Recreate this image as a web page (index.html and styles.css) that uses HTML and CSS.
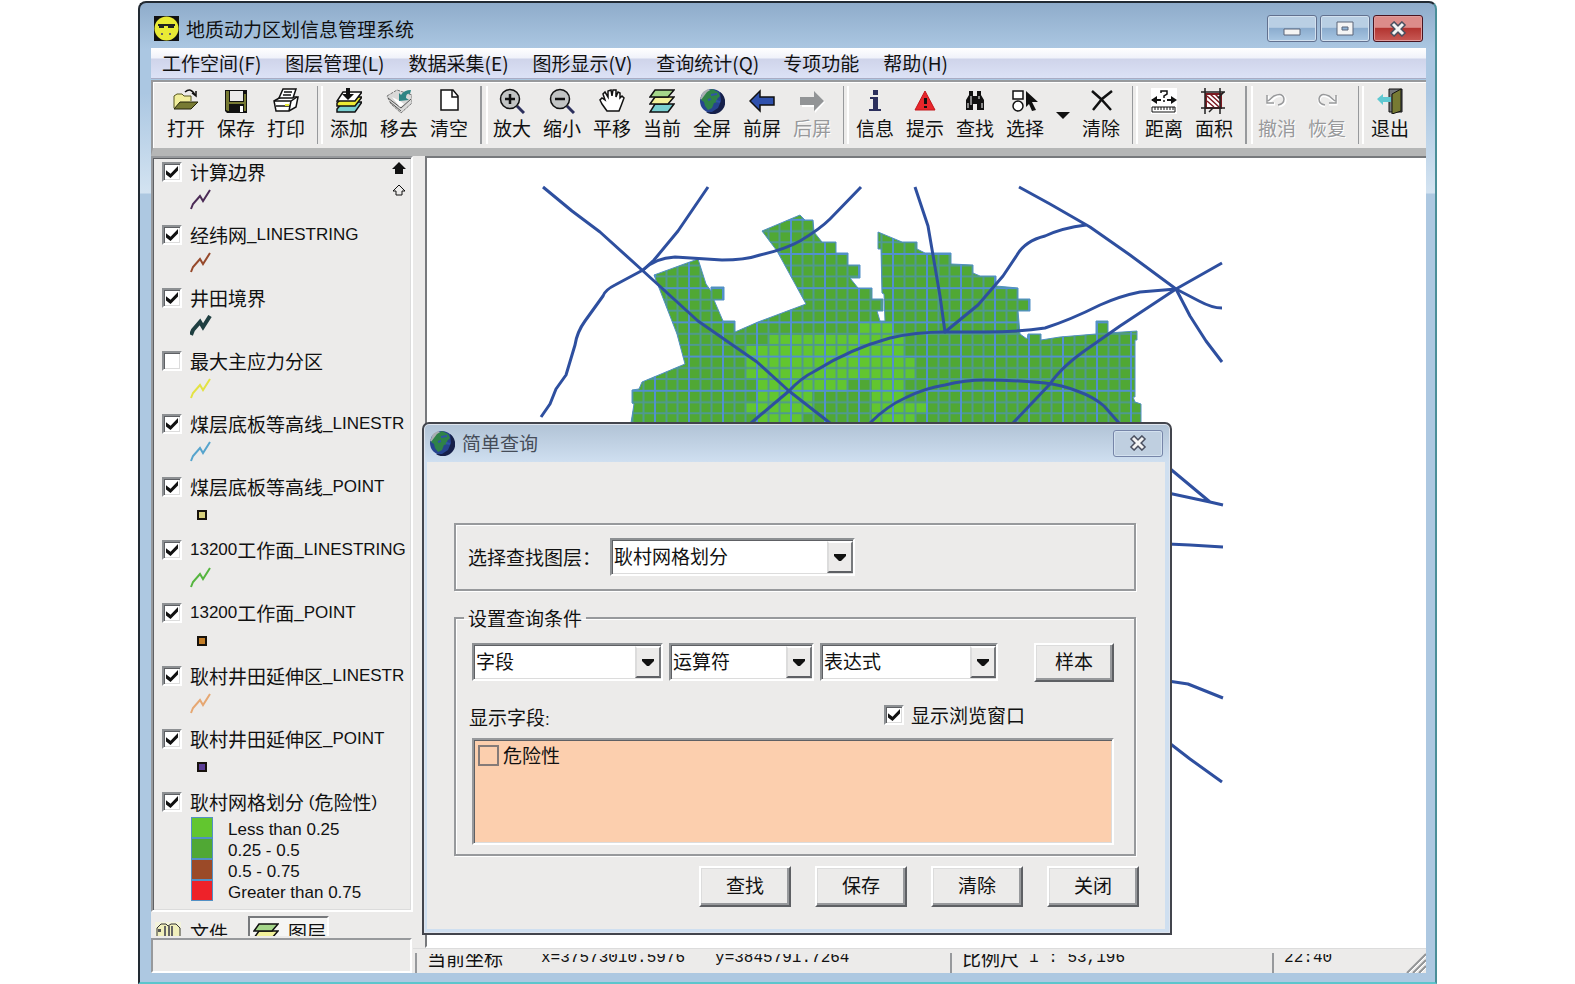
FILE: index.html
```html
<!DOCTYPE html>
<html lang="zh-CN">
<head>
<meta charset="utf-8">
<title>地质动力区划信息管理系统</title>
<link rel="stylesheet" href="styles.css">
</head>
<body>
<svg class="defs" aria-hidden="true">
  <defs>
    <symbol id="zig" viewBox="0 0 22 22"><path d="M1 20 3 15 10 7 13 12 20 1" fill="none" stroke="currentColor"/></symbol>
    <symbol id="globe" viewBox="0 0 26 26">
      <circle cx="13" cy="13" r="12" fill="#27448f"/>
      <path d="M21 4a12 12 0 0 1-14 20l6 0 6-4 3-7z" fill="#16204a"/>
      <path d="M1 11 4 4l5-3 3 2-4 6-4 3z" fill="#a9aeb2"/>
      <path d="M8 4l5-3 6 3 2 4-3 3 1 3-4 1-2 5-4 2-3-4-1-4-3-2 3-4z" fill="#2f8248"/>
      <path d="M12 7l6-1M9 12l3-1M17 13l4 1" stroke="#2f55a6" stroke-width="2"/>
    </symbol>
    <symbol id="layers" viewBox="0 0 26 26">
      <path d="M6 16h19l-6 8H1z" fill="#79cfd0" stroke="#111" stroke-width="1.5"/>
      <path d="M6 9h19l-6 7H1z" fill="#f2f19a" stroke="#111" stroke-width="1.5"/>
      <path d="M6 2h19l-6 7H1z" fill="#a5d68a" stroke="#111" stroke-width="1.5"/>
    </symbol>
    <symbol id="cross" viewBox="0 0 18 16"><path d="M3 2 15 14M15 2 3 14" stroke="#4b5060" stroke-width="6"/><path d="M4 3 14 13M14 3 4 13" stroke="#f4f4f4" stroke-width="3"/></symbol>
    <symbol id="drop" viewBox="0 0 12 7"><path d="M0 0h12v2L7 7H5L0 2z" fill="#111"/></symbol>
    <pattern id="grid" x="654" y="252" width="34" height="34.2" patternUnits="userSpaceOnUse">
      <path d="M12.5 0V34.2M23.5 0V34.2M0 12.5H34M0 23.5H34" stroke="#4f9990" stroke-width="2"/>
      <path d="M1 0V34.2M0 1H34" stroke="#5290cf" stroke-width="2"/>
    </pattern>
  </defs>
</svg>

<div class="window">
  <header class="titlebar">
    <svg class="app-icon" viewBox="0 0 25 25"><path d="M0 0h25v25H0z" fill="#111"/><circle cx="12.500" cy="12.500" r="12" fill="#e9ea35"/><path d="M4 8h17v2H4zM5 10h5v2H5zM14 10h6v2h-6z" fill="#222"/><path d="M7 17h2v2H7zM15 17h2v2h-2z" fill="#666"/></svg>
    <h1>地质动力区划信息管理系统</h1>
    <div class="win-buttons">
      <button class="win-btn" aria-label="最小化"><svg width="18" height="16" viewBox="0 0 18 16"><path d="M1 8h16v6H1z" fill="#f4f4f4" stroke="#5b6578"/></svg></button>
      <button class="win-btn" aria-label="最大化"><svg width="18" height="16" viewBox="0 0 18 16"><path d="M1 1h16v13H1z" fill="#f4f4f4" stroke="#5b6578"/><path d="M6 6h6v3H6z" fill="#8fb3d6" stroke="#5b6578"/></svg></button>
      <button class="win-btn close" aria-label="关闭窗口"><svg width="18" height="16"><use href="#cross"/></svg></button>
    </div>
  </header>

  <nav class="menubar">
    <a href="#">工作空间(F)</a><a href="#">图层管理(L)</a><a href="#">数据采集(E)</a><a href="#">图形显示(V)</a><a href="#">查询统计(Q)</a><a href="#">专项功能</a><a href="#">帮助(H)</a>
  </nav>

  <div class="toolbar">
    <button class="tool"><svg viewBox="0 0 26 26"><path d="M1 20V8l3-2h5l2 2h7v5" fill="#f1ee9c" stroke="#55551c"/><path d="M1 21 7 14H25L18 21z" fill="#777a33" stroke="#22220a"/><path d="M12 4q6-5 10 3M19 5l4 3V3" fill="none" stroke="#111" stroke-width="1.500"/></svg>打开</button>
    <button class="tool"><svg viewBox="0 0 26 26"><path d="M2 2h22v23H4l-2-2z" fill="#111"/><path d="M3 3h3v20H5l-2-1zM21 6h2v17h-2zM6 14h15v2H6z" fill="#777a33"/><path d="M7 3h13v10H7z" fill="#ecebea"/><path d="M17 18h3v6h-3z" fill="#fff"/></svg>保存</button>
    <button class="tool"><svg viewBox="0 0 26 26"><path d="M1 13l7-4h17l-2 10-7 4H3z" fill="#fff" stroke="#111" stroke-width="1.500"/><path d="M10 1h13l-3 9H6z" fill="#fff" stroke="#111" stroke-width="1.500"/><path d="M11 4h8M10 7h8M1 13h17l6-4M18 13l-2 10M3 18h14" fill="none" stroke="#111" stroke-width="1.500"/><path d="M12 16h4v2h-4z" fill="#e9ea35"/></svg>打印</button>
    <span class="sep"></span>
    <button class="tool"><svg viewBox="0 0 26 26"><path d="M7 14h19l-7 10H1v-3z" fill="#79cfd0" stroke="#111" stroke-width="1.500"/><path d="M7 9h19l-7 9H1v-3z" fill="#eceb35" stroke="#111" stroke-width="1.500"/><path d="M7 4h19l-7 9H1z" fill="#fff" stroke="#111" stroke-width="1.500"/><path d="M10 0h4v6h4l-6 6-6-6h4z" fill="#111"/></svg>添加</button>
    <button class="tool"><svg viewBox="0 0 26 26"><path d="M1 8 11 2 26 7V15L15 25 5 16z" fill="#d9d9d8" stroke="#777" stroke-dasharray="3 1"/><path d="M2 10 15 20 25 11M4 14 15 23" fill="none" stroke="#555"/><path d="M6 9 14 13 18 16 14 19z" fill="#fff"/><path d="M25 2 24 6q-4-1-4 4l3 2-10 1V5l2 2q3-5 10-5z" fill="#2e8484"/></svg>移去</button>
    <button class="tool"><svg viewBox="0 0 26 26"><path d="M5 2h12l5 6v14H5z" fill="#fff" stroke="#111" stroke-width="1.500"/><path d="M16 2v7h6" fill="none" stroke="#111" stroke-width="1.500"/></svg>清空</button>
    <span class="sep wide"></span>
    <button class="tool"><svg viewBox="0 0 26 26"><path d="M18 18l7 7" stroke="#2b2f5c" stroke-width="3"/><circle cx="11" cy="11" r="9.500" fill="#c2c4c4" stroke="#111" stroke-width="1.500"/><path d="M6 11h10M11 6v10" stroke="#111" stroke-width="2.500"/></svg>放大</button>
    <button class="tool"><svg viewBox="0 0 26 26"><path d="M18 18l7 7" stroke="#2b2f5c" stroke-width="3"/><circle cx="11" cy="11" r="9.500" fill="#c2c4c4" stroke="#111" stroke-width="1.500"/><path d="M6 11h10" stroke="#111" stroke-width="2.500"/></svg>缩小</button>
    <button class="tool"><svg viewBox="0 0 26 26"><path d="M8 23 3 16 1 12 3 10 6 12 4 6 6 4 9 9 9 3 12 2 13 8 14 2 17 2 17 9 19 4 21 5 21 10 23 8 25 10 22 18 20 23z" fill="#fff" stroke="#111" stroke-width="1.500"/></svg>平移</button>
    <button class="tool"><svg><use href="#layers"/></svg>当前</button>
    <button class="tool"><svg><use href="#globe"/></svg>全屏</button>
    <button class="tool"><svg viewBox="0 0 26 26"><path d="M1 13 11 3v6h14v8H11v6z" fill="#2f51ad" stroke="#111" stroke-width="1.500"/></svg>前屏</button>
    <button class="tool" disabled><svg viewBox="0 0 26 26"><path d="M26 14 16 4v6H3v9h13v6z" fill="#fff"/><path d="M25 13 15 3v6H1v8h14v6z" fill="#929496"/></svg>后屏</button>
    <span class="sep"></span>
    <button class="tool"><svg viewBox="0 0 26 26"><path d="M11 2h5v5h-5zM8 9h8v12h3v2H7v-2h4V11H8z" fill="#2b2f5c"/></svg>信息</button>
    <button class="tool"><svg viewBox="0 0 26 26"><path d="M13 3 23 22H3z" fill="#e8262b" stroke="#c4161b"/><path d="M12 10h3v6h-3zM12 18h3v2h-3z" fill="#111"/></svg>提示</button>
    <button class="tool"><svg viewBox="0 0 26 26"><path d="M7 3h4v5h4V3h4v4l3 5v10h-7v-6h-4v6H4V12l3-5z" fill="#111"/><path d="M9 8v9M17 8v3M6 15v5M20 15v5" stroke="#fff"/></svg>查找</button>
    <button class="tool"><svg viewBox="0 0 26 26"><path d="M1 3h10v8H1z" fill="#fff" stroke="#111" stroke-width="1.500"/><circle cx="6" cy="18" r="5" fill="#fff" stroke="#111" stroke-width="1.500"/><path d="M14 3 26 14h-6l4 8-4 1-3-7-3 3z" fill="#111"/></svg>选择</button>
    <button class="tool-drop" aria-label="选择方式"><svg width="14" height="7" viewBox="0 0 14 7"><path d="M0 0h14L7 7z" fill="#111"/></svg></button>
    <button class="tool"><svg viewBox="0 0 26 26"><path d="M4 3 13 11 23 22" fill="none" stroke="#111" stroke-width="2.500"/><path d="M24 3 14 11 5 22" fill="none" stroke="#111" stroke-width="2.500"/></svg>清除</button>
    <span class="sep"></span>
    <button class="tool"><svg viewBox="0 0 26 26"><path d="M0 0h26v26H0z" fill="#fff"/><path d="M10 5V3h6v3l-3 2v2M13 12v2" fill="none" stroke="#111" stroke-width="1.500"/><path d="M1 12h9M16 12h8" stroke="#111" stroke-width="2"/><path d="M0 12 6 8v8zM26 12l-6-4v8z" fill="#111"/><path d="M1 19h23v5H1zM4 19v3M7 19v3M10 19v3M13 19v3M16 19v3M19 19v3M22 19v3" fill="none" stroke="#111"/></svg>距离</button>
    <button class="tool"><svg viewBox="0 0 26 26"><path d="M5 6h15v14H5z" fill="#fff" stroke="#7c1a22" stroke-width="2"/><path d="M6 8 18 19M6 13l7 6M9 6l11 10M14 6l6 6" stroke="#7c1a22" stroke-width="1.500"/><path d="M4 0v26M19 0v26M0 4h24M0 20h24M17 10l6-6M8 24l4-4" stroke="#222" stroke-width="1.500"/></svg>面积</button>
    <span class="sep wide"></span>
    <button class="tool" disabled><svg viewBox="0 0 26 26"><path d="M5 14 11 9q9-4 10 3 0 5-6 6M4 8v8h7" fill="none" stroke="#fff" stroke-width="3"/><path d="M4 13 10 8q9-4 10 3 0 5-6 6M3 7v8h7" fill="none" stroke="#98999b" stroke-width="1.500"/></svg>撤消</button>
    <button class="tool" disabled><svg viewBox="0 0 26 26"><path d="M22 14 15 9q-9-4-10 3 0 5 6 6M22 8v8h-7" fill="none" stroke="#fff" stroke-width="3"/><path d="M21 13 15 8q-9-4-10 3 0 5 6 6M22 7v8h-7" fill="none" stroke="#98999b" stroke-width="1.500"/></svg>恢复</button>
    <span class="sep"></span>
    <button class="tool"><svg viewBox="0 0 26 26"><path d="M12 1h13v23H12z" fill="#77797c" stroke="#111"/><path d="M15 6 24 1V23L15 26z" fill="#777a33" stroke="#111"/><path d="M0 11 6 6v3h8v5H6v3z" fill="#5fc9d2"/></svg>退出</button>
  </div>

  <main class="workspace">
    <aside class="side">
      <section class="layers">
        <div class="movers">
          <button aria-label="上移"><svg width="14" height="12" viewBox="0 0 14 12"><path d="M7 0 14 7H11v5H3V7H0z" fill="#111"/></svg></button>
          <button aria-label="下移"><svg width="14" height="12" viewBox="0 0 14 12"><path d="M7 1 13 7H10v4H4V7H1z" fill="none" stroke="#111"/></svg></button>
        </div>
        <ul>
          <li><label><input type="checkbox" checked>计算边界</label><svg class="zig purple"><use href="#zig"/></svg></li>
          <li><label><input type="checkbox" checked>经纬网<span class="en">_LINESTRING</span></label><svg class="zig rust"><use href="#zig"/></svg></li>
          <li><label><input type="checkbox" checked>井田境界</label><svg class="zig teal"><use href="#zig"/></svg></li>
          <li><label><input type="checkbox">最大主应力分区</label><svg class="zig yellow"><use href="#zig"/></svg></li>
          <li><label><input type="checkbox" checked>煤层底板等高线<span class="en">_LINESTR</span></label><svg class="zig sky"><use href="#zig"/></svg></li>
          <li><label><input type="checkbox" checked>煤层底板等高线<span class="en">_POINT</span></label><i class="pt khaki"></i></li>
          <li><label><input type="checkbox" checked><span class="en">13200</span>工作面<span class="en">_LINESTRING</span></label><svg class="zig green"><use href="#zig"/></svg></li>
          <li><label><input type="checkbox" checked><span class="en">13200</span>工作面<span class="en">_POINT</span></label><i class="pt orange"></i></li>
          <li><label><input type="checkbox" checked>耿村井田延伸区<span class="en">_LINESTR</span></label><svg class="zig peach"><use href="#zig"/></svg></li>
          <li><label><input type="checkbox" checked>耿村井田延伸区<span class="en">_POINT</span></label><i class="pt violet"></i></li>
          <li class="themed"><label><input type="checkbox" checked>耿村网格划分<span class="en">&nbsp;(</span>危险性<span class="en">)</span></label>
            <dl>
              <dt class="c1"></dt><dd>Less than 0.25</dd>
              <dt class="c2"></dt><dd>0.25 - 0.5</dd>
              <dt class="c3"></dt><dd>0.5 - 0.75</dd>
              <dt class="c4"></dt><dd>Greater than 0.75</dd>
            </dl>
          </li>
        </ul>
      </section>
      <div class="tabs">
        <button class="tab"><svg width="26" height="22" viewBox="0 0 26 22"><path d="M0 0h26v22H0z" fill="#f3f3dc"/><path d="M2 22V6l4-4h5l2 2 3-2h5l4 4v16" fill="#f0efbb" stroke="#333"/><path d="M10 4v18M14 4v18M17 4v18" stroke="#666" stroke-width="2"/><path d="M3 7h3v3H3z" fill="#555"/></svg>文件</button>
        <button class="tab on"><svg width="26" height="26"><use href="#layers"/></svg>图层</button>
      </div>
      <div class="side-foot"></div>
    </aside>

    <section class="view">
      <div class="map">
        <svg viewBox="427 157 999 788" preserveAspectRatio="xMinYMin meet" role="img" aria-label="矿区地图">
          <defs><path id="area" d="M631 422 634 403 632 402V389L639 388 642 381 685 363 677 333 654 274 698 258 706 283 711 290V286H724V299H714L723 320H735V331L758 321 806 303 777 250 762 230 800 214 805 219H813L814 231 822 241H836V252H848V264H860V277H850L858 287H872V298H883V310H877L880 320H885L884 293 882 292 881 248H878V231L902 241H917V248L925 252H951V263L973 264V272L980 275H996V285L1018 287V298H1030V310H1018L1020 333 1027 338 1028 333H1041V339L1060 336 1096 333V320H1108V332L1137 330V339H1135V396H1133L1135 401 1141 403V900H631z"/></defs>
          <use href="#area" fill="#50a834"/>
          <path fill="#62c62f" d="M859 322h34v12h-34zM768 334h136v11H768zM746 345h158v12H746zM746 357h169v22H746zM757 379h90v12h-90zM872 379h32v12h-32zM757 391h55v11h-55zM872 391h32v11h-32zM746 402h66v11h-66zM872 402h55v11h-55zM757 413h45v12h-45zM872 413h43v12h-43z"/>
          <use href="#area" fill="url(#grid)" stroke="#5290c4"/>
          <g fill="none" stroke="#2e4f9f" stroke-width="3" stroke-linejoin="round">
            <path d="M543 186 572 210 600 231 642 269 698 320 757 361 789 390 830 422"/>
            <path d="M708 186 678 230 654 259 643 269 615 284Q605 289 603 295L585 320Q577 331 575 344L566 374 556 388 550 403 541 416"/>
            <path d="M643 269Q655 257 675 256L722 259Q745 259 760 254 786 248 800 240 820 228 830 218L861 186"/>
            <path d="M751 422 789 390Q801 377 815 370 850 348 890 337 915 331 945 331L985 331Q1020 331 1045 327 1070 319 1100 304 1120 295 1140 291L1176 288"/>
            <path d="M915 186 928 225 940 295 945 331 978 304 1003 275 1017 254Q1025 240 1045 235 1062 227 1086 224"/>
            <path d="M1019 186 1050 203 1090 226 1130 254 1176 288 1199 300Q1212 307 1222 307"/>
            <path d="M1222 262 1176 288 1120 325 1090 346Q1062 365 1050 383L1013 422"/>
            <path d="M1176 288 1190 315 1206 340 1222 361"/>
            <path d="M870 422Q887 405 905 397 925 387 945 384 965 379 985 379 1015 379 1045 382 1062 384 1077 390 1094 396 1104 405L1119 422"/>
            <path d="M1168 466 1210 501 1223 504M1168 492 1210 501M1168 543 1190 544 1223 546M1168 680 1188 683 1223 697M1168 741 1190 758 1222 781"/>
          </g>
        </svg>
      </div>
      <footer class="status">
        <div class="cell coords"><span>当前坐标</span><span class="num">x=37573010.5976</span><span class="num">y=3845791.7264</span></div>
        <div class="cell scale"><span>比例尺</span><span class="num">1 : 53,196</span></div>
        <div class="cell clock"><span class="num">22:40</span><svg class="grip" width="20" height="20" viewBox="0 0 20 20"><path d="M1 20 20 1M7 20 20 7M13 20l7-7" stroke="#929496" stroke-width="2"/><path d="M3 20 20 3M9 20 20 9M15 20l5-5" stroke="#fff"/></svg></div>
      </footer>
    </section>
  </main>

  <form class="dialog" aria-label="简单查询">
    <header class="dialog-title">
      <svg width="26" height="26"><use href="#globe"/></svg>
      <h2>简单查询</h2>
      <button type="button" class="win-btn pale" aria-label="关闭对话框"><svg width="18" height="16"><use href="#cross"/></svg></button>
    </header>
    <div class="dialog-body">
      <div class="group pick">
        <label for="layer">选择查找图层：</label>
        <span class="combo w-layer"><select id="layer"><option>耿村网格划分</option></select><span class="arrow"><svg width="12" height="7"><use href="#drop"/></svg></span></span>
      </div>
      <fieldset class="group">
        <legend>设置查询条件</legend>
        <div class="conditions">
          <span class="combo w-field"><select aria-label="字段"><option>字段</option></select><span class="arrow"><svg width="12" height="7"><use href="#drop"/></svg></span></span>
          <span class="combo w-op"><select aria-label="运算符"><option>运算符</option></select><span class="arrow"><svg width="12" height="7"><use href="#drop"/></svg></span></span>
          <span class="combo w-expr"><select aria-label="表达式"><option>表达式</option></select><span class="arrow"><svg width="12" height="7"><use href="#drop"/></svg></span></span>
          <button type="button" class="btn sample">样本</button>
        </div>
        <div class="fields-head">
          <span>显示字段<span class="en">:</span></span>
          <label><input type="checkbox" checked>显示浏览窗口</label>
        </div>
        <div class="listbox"><label><input type="checkbox" class="flat">危险性</label></div>
      </fieldset>
      <div class="actions">
        <button type="button" class="btn">查找</button><button type="button" class="btn">保存</button><button type="button" class="btn">清除</button><button type="button" class="btn">关闭</button>
      </div>
    </div>
  </form>
</div>
</body>
</html>
```

FILE: styles.css
```css
* { box-sizing: border-box; }
body {
  margin: 0;
  padding: 1px 138px 0;
  background: #fff;
  color: #111;
  font: 19px/24px "Noto Sans CJK SC", "Liberation Sans", sans-serif;
}
button, select, input { font: inherit; color: inherit; margin: 0; }
button { padding: 0; border: 0; background: none; }
svg { display: block; flex: none; }
.defs { position: absolute; width: 0; height: 0; }
.en { font-family: "Liberation Sans", sans-serif; font-size: 17px; }
.num { font-family: "Liberation Mono", monospace; font-size: 16px; white-space: pre; }

.window {
  position: relative;
  display: flex;
  flex-direction: column;
  min-height: calc(100vh - 1px);
  padding: 0 9px 9px 11px;
  border: 2px solid #222a33;
  border-right-color: #4a8e98;
  border-bottom-color: #5cc5cc;
  border-radius: 8px 8px 0 0;
  background: linear-gradient(#8faccb 0, #abc7e2 46px, #abc7e2 90px, #d3e3f1 190px, #adc8e1 191px);
}

.titlebar { display: flex; align-items: center; height: 45px; padding: 6px 3px 0; }
.app-icon { width: 25px; height: 25px; }
h1, h2 { margin: 0; font-size: inherit; font-weight: 400; }
h1 { flex: 1; margin-left: 7px; }
.win-buttons { display: flex; gap: 3px; }
.win-btn {
  display: flex;
  align-items: center;
  justify-content: center;
  width: 50px;
  height: 27px;
  border: 1px solid #62718f;
  border-radius: 3px;
  box-shadow: inset 0 0 0 1px #d3e1ef;
  background: linear-gradient(#b9cfe4 45%, #8cadcf 50%, #a8c6e2);
}
.win-btn.close { border-color: #4a1420; box-shadow: inset 0 0 0 1px #e09c9c; background: linear-gradient(#dc8c8a 45%, #b33531 50%, #c85a55); }
.win-btn.pale { margin-left: auto; border-color: #7685a8; background: #bfcfe0; }

.menubar {
  display: flex;
  gap: 24px;
  height: 31px;
  padding: 3px 11px 0;
  border-bottom: 1px solid #a9acc4;
  background: linear-gradient(#fff, #f0f2fa 10px, #cfd4ea 11px, #dce2f6);
}
.menubar a { color: inherit; text-decoration: none; white-space: nowrap; }

.toolbar {
  display: flex;
  height: 76px;
  margin-top: 1px;
  padding: 6px 0 0 8px;
  border-top: 2px solid #97999c;
  border-left: 2px solid #97999c;
  border-bottom: 8px solid #b5b6b6;
  box-shadow: inset 1px 1px #fff;
  background: #ecebea;
}
.tool { display: flex; flex-direction: column; align-items: center; gap: 2px; width: 50px; white-space: nowrap; }
.tool svg { width: 26px; height: 26px; }
.tool:disabled { color: #98999b; text-shadow: 1px 1px #fff; }
.tool-drop { display: flex; align-items: center; justify-content: center; width: 26px; height: 54px; }
.sep { width: 13px; height: 58px; margin-top: -2px; padding-left: 6px; }
.sep::before { content: ""; display: block; width: 3px; height: 58px; border-left: 1px solid #97999c; border-right: 2px solid #fff; }
.sep.wide::before { width: 4px; border-left-width: 2px; }

.workspace { display: flex; flex: 1; background: #ecebea; }
.side { display: flex; flex-direction: column; width: 262px; }
.layers {
  position: relative;
  display: flex;
  flex: 1;
  flex-direction: column;
  border: 2px solid;
  border-color: #97999c #fff #fff #97999c;
  box-shadow: inset 1px 1px #5e6064, inset -1px -1px #dcdcdc;
}
.layers ul { display: flex; flex: 1; flex-direction: column; margin: 0; padding: 0 1px 1px 9px; list-style: none; }
.layers li { flex: 1; overflow: hidden; }
.layers li.themed { flex: none; height: 121px; }
.layers label { display: flex; align-items: center; height: 28px; white-space: nowrap; }
.layers input { margin-right: 8px; }
.movers { position: absolute; top: 4px; right: 5px; display: flex; flex-direction: column; gap: 10px; }
.zig { width: 22px; height: 22px; margin: 3px 0 0 28px; stroke-width: 2; }
.purple { color: #4b2a56; }
.rust { color: #96492b; }
.teal { color: #1f3f41; stroke-width: 4; }
.yellow { color: #e3e243; }
.sky { color: #56a4cd; }
.green { color: #55b53f; }
.peach { color: #e6a772; }
.pt { display: block; width: 10px; height: 10px; margin: 9px 0 0 35px; border: 2px solid #17120c; }
.khaki { background: #d8d07c; }
.orange { background: #c47e28; }
.violet { background: #5b3d96; }
dl { display: grid; grid-template-columns: 22px 1fr; column-gap: 15px; margin: 1px 0 0 29px; font: 17px/21px "Liberation Sans", sans-serif; }
dt { height: 21px; border: 1px solid #5290c4; }
dd { margin: 2px 0 -2px; white-space: nowrap; }
.c1 { background: #62c62f; }
.c2 { background: #50a834; }
.c3 { background: #9b4a28; }
.c4 { background: #ee2229; }

input[type="checkbox"] {
  appearance: none;
  flex: none;
  width: 20px;
  height: 20px;
  border: 2px solid;
  border-color: #8d9093 #fff #fff #8d9093;
  box-shadow: inset 1px 1px #5e6064, inset -1px -1px #dcdcdc;
  background: #fff;
}
input[type="checkbox"]:checked::before {
  content: "";
  display: block;
  width: 12px;
  height: 12px;
  margin: 2px;
  background: #111;
  clip-path: polygon(0 35%, 38% 65%, 100% 0, 100% 38%, 38% 100%, 0 70%);
}
input[type="checkbox"].flat { width: 21px; height: 21px; border: 2px solid #857b78; box-shadow: none; background: none; }

.tabs { display: flex; align-items: flex-start; height: 24px; padding: 4px 0 0 4px; overflow: hidden; }
.tab { display: flex; gap: 9px; height: 32px; padding-top: 6px; line-height: 20px; white-space: nowrap; }
.tab.on { margin-left: 20px; padding: 4px 1px 0 3px; border: 2px solid; border-color: #77797c #fff #fff #77797c; background: #f5f5f4; }
.side-foot { height: 35px; margin: 2px 1px 0 0; border: 2px solid; border-color: #97999c #fff #fff #97999c; }

.view { display: flex; flex: 1; flex-direction: column; min-width: 0; }
.map {
  flex: 1;
  margin-left: 12px;
  border: 2px solid;
  border-color: #77797c transparent #fff #77797c;
  border-right-width: 0;
  background: #fff;
  overflow: hidden;
}
.map svg { width: 100%; }
.status { display: flex; height: 25px; padding: 4px 0 0; border-top: 1px solid #dcdcdc; }
.cell { display: flex; align-items: flex-end; height: 20px; margin-left: 2px; padding: 0 0 4px 10px; border-left: 2px solid #97999c; overflow: hidden; white-space: nowrap; }
.cell > span { height: 15px; line-height: 7px; overflow: hidden; }
.cell > .num { line-height: 9px; }
.coords { flex: 558; gap: 38px; }
.coords .num + .num { margin-left: -8px; }
.scale { flex: 330; gap: 10px; }
.clock { flex: 152; position: relative; }
.grip { position: absolute; right: 0; bottom: 0; }

.dialog {
  position: absolute;
  top: 419px;
  left: 282px;
  width: 750px;
  padding: 0 5px 4px;
  border: 2px solid #43454d;
  border-radius: 7px 7px 0 0;
  background: linear-gradient(#b1c3d6, #cfdff0 38px);
  box-shadow: inset 0 0 0 1px #dfe5ee;
}
.dialog-title { display: flex; align-items: center; gap: 7px; height: 38px; padding-right: 2px; color: #454c58; }
.dialog-body { margin-left: -2px; padding: 61px 29px 22px 27px; background: #ecebea; }
.group { border: 2px solid #97999c; box-shadow: 1px 1px #fff, inset 1px 1px #fff; }
.pick { display: flex; align-items: center; height: 68px; padding-left: 12px; }
.pick label { width: 142px; white-space: nowrap; }
fieldset.group { margin: 15px 0 0; padding: 13px 20px 9px 16px; min-width: 0; }
legend { height: 24px; margin-left: -8px; padding: 0 4px; }
.combo {
  display: flex;
  height: 38px;
  border: 2px solid;
  border-color: #8d9093 #fff #fff #8d9093;
  box-shadow: inset 1px 1px #5e6064, inset -1px -1px #dcdcdc;
  background: #fff;
  position: relative;
}
.combo select { appearance: none; flex: 1; min-width: 0; padding: 0 2px 3px; border: 0; background: none; outline: 0; }
.arrow {
  position: absolute;
  top: 1px;
  right: 0;
  bottom: 1px;
  display: flex;
  align-items: center;
  justify-content: center;
  width: 26px;
  border: 2px solid;
  border-color: #fff #77797c #5e6064 #dcdcdc;
  background: #ecebea;
  pointer-events: none;
}
.w-layer { width: 245px; }
.w-field { width: 191px; }
.w-op { width: 145px; }
.w-expr { width: 178px; }
.conditions { display: flex; gap: 6px; }
.btn {
  width: 92px;
  height: 41px;
  padding-bottom: 3px;
  border: 2px solid;
  border-color: #fff #5e6064 #5e6064 #fff;
  box-shadow: inset -2px -2px #97999c, inset 1px 1px #dcdcdc;
  background: #ecebea;
}
.sample { width: 80px; height: 39px; margin-left: auto; }
.fields-head { display: flex; justify-content: space-between; align-items: center; height: 48px; margin-top: 8px; padding: 2px 89px 0 0; }
.fields-head > span { margin-left: -3px; padding-top: 6px; }
.fields-head label, .listbox label { display: flex; align-items: center; gap: 7px; }
.listbox {
  height: 107px;
  padding: 3px 4px;
  border: 2px solid;
  border-color: #97999c #fff #fff #97999c;
  box-shadow: inset 1px 1px #5e6064, inset -1px -1px #dcdcdc;
  background: #fccfae;
}
.listbox label { gap: 4px; }
.actions { display: flex; justify-content: flex-end; gap: 24px; margin: 10px -3px 0 0; }
```
